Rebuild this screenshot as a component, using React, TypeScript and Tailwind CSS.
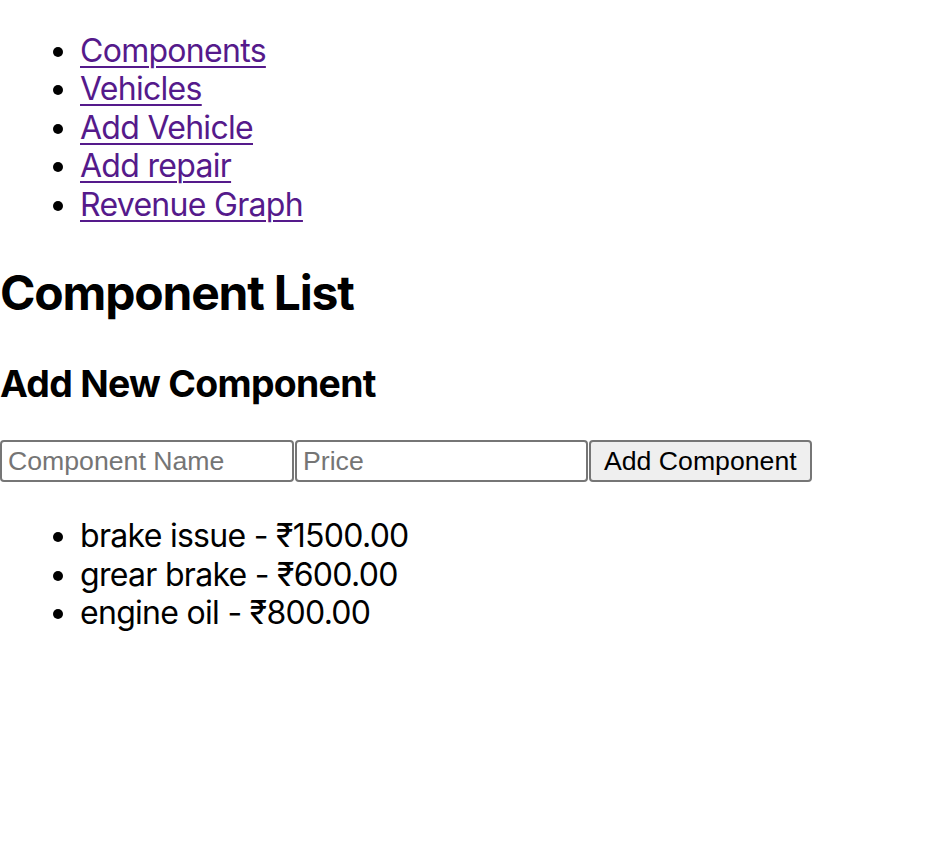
import { useState } from "react";

const links = ["Components", "Vehicles", "Add Vehicle", "Add repair", "Revenue Graph"];

const initialItems = [
  { name: "brake issue", price: 1500 },
  { name: "grear brake", price: 600 },
  { name: "engine oil", price: 800 },
];

export default function App() {
  const [items, setItems] = useState(initialItems);
  const [name, setName] = useState("");
  const [price, setPrice] = useState("");

  const add = () => {
    if (!name || !price) return;
    setItems([...items, { name, price: Number(price) }]);
    setName("");
    setPrice("");
  };

  return (
    <div className="min-h-screen bg-white text-black font-['Inter',sans-serif] text-[32px] leading-[1.2] tracking-[-0.022em]">
      {/* Nav */}
      <ul className="list-disc pl-[80px] my-[32px]">
        {links.map((l) => (
          <li key={l}>
            <a href="#" className="text-[#551a8b] underline decoration-[2px] underline-offset-[4px]">
              {l}
            </a>
          </li>
        ))}
      </ul>

      <section>
        <h1 className="text-[48px] font-bold leading-[1.2] mt-[40px] mb-[40px] tracking-[-0.025em]">Component List</h1>

        <h3 className="text-[37.4px] font-bold leading-[1.2] mb-[34px]">Add New Component</h3>

        <div className="flex font-['Liberation_Sans',Arial,sans-serif] text-[26.67px] leading-[1.15] tracking-normal">
          <input
            value={name}
            onChange={(e) => setName(e.target.value)}
            placeholder="Component Name"
            className="w-[294px] h-[42px] border-2 border-[#767676] rounded-[4px] px-[6px] placeholder:text-[#757575] outline-none"
          />
          <input
            value={price}
            onChange={(e) => setPrice(e.target.value)}
            placeholder="Price"
            className="ml-[1px] w-[293px] h-[42px] border-2 border-[#767676] rounded-[4px] px-[6px] placeholder:text-[#757575] outline-none"
          />
          <button
            onClick={add}
            className="ml-[1px] h-[42px] px-[13px] bg-[#efefef] border-2 border-[#767676] rounded-[4px] text-black"
          >
            Add Component
          </button>
        </div>

        <ul className="list-disc pl-[80px] mt-[35px] mb-[32px]">
          {items.map((c) => (
            <li key={c.name}>
              {c.name} - ₹{c.price.toFixed(2)}
            </li>
          ))}
        </ul>
      </section>
    </div>
  );
}
